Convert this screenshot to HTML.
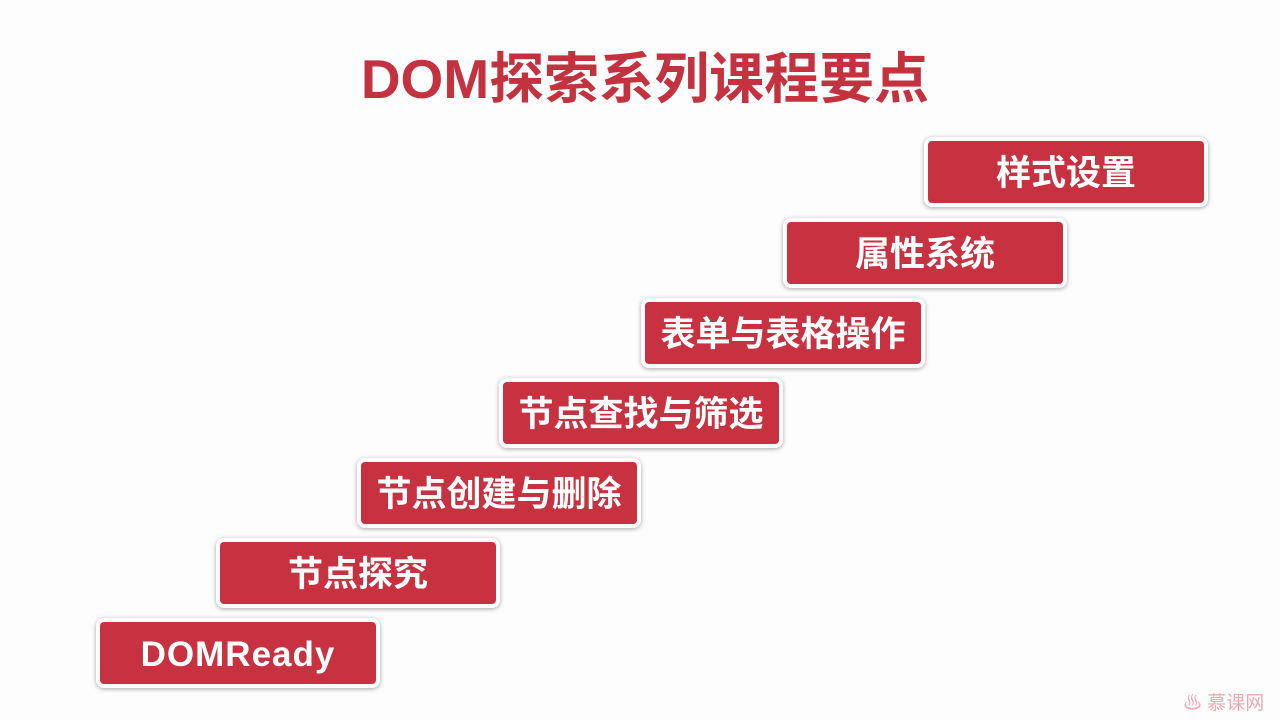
<!DOCTYPE html>
<html><head><meta charset="utf-8"><style>
body{margin:0;width:1280px;height:720px;background:#fdfdfd;overflow:hidden;position:relative;font-family:"Liberation Sans","Noto Sans CJK SC",sans-serif;}
.t{position:absolute;left:0;width:1290px;top:44px;text-align:center;font-size:55px;font-weight:bold;color:#c4323f;line-height:70px;letter-spacing:0px}
.b{position:absolute;width:276px;height:62px;background:#c8313f;border:4px solid #fff;border-radius:8px;box-shadow:0 1px 5px rgba(0,0,0,.35);color:#fff;font-weight:bold;font-size:35px;text-align:center;line-height:66px}
.logo{position:absolute;left:1183px;top:688px;color:#eeaab0;font-size:19px;}
</style></head><body>
<div class="t">DOM探索系列课程要点</div>
<div class="b" style="left:924px;top:137px">样式设置</div>
<div class="b" style="left:783px;top:218px">属性系统</div>
<div class="b" style="left:641px;top:298px">表单与表格操作</div>
<div class="b" style="left:499px;top:378px">节点查找与筛选</div>
<div class="b" style="left:357px;top:458px">节点创建与删除</div>
<div class="b" style="left:216px;top:538px">节点探究</div>
<div class="b" style="left:96px;top:618px;letter-spacing:1px">DOMReady</div>
<div class="logo">♨ 慕课网</div>
</body></html>
